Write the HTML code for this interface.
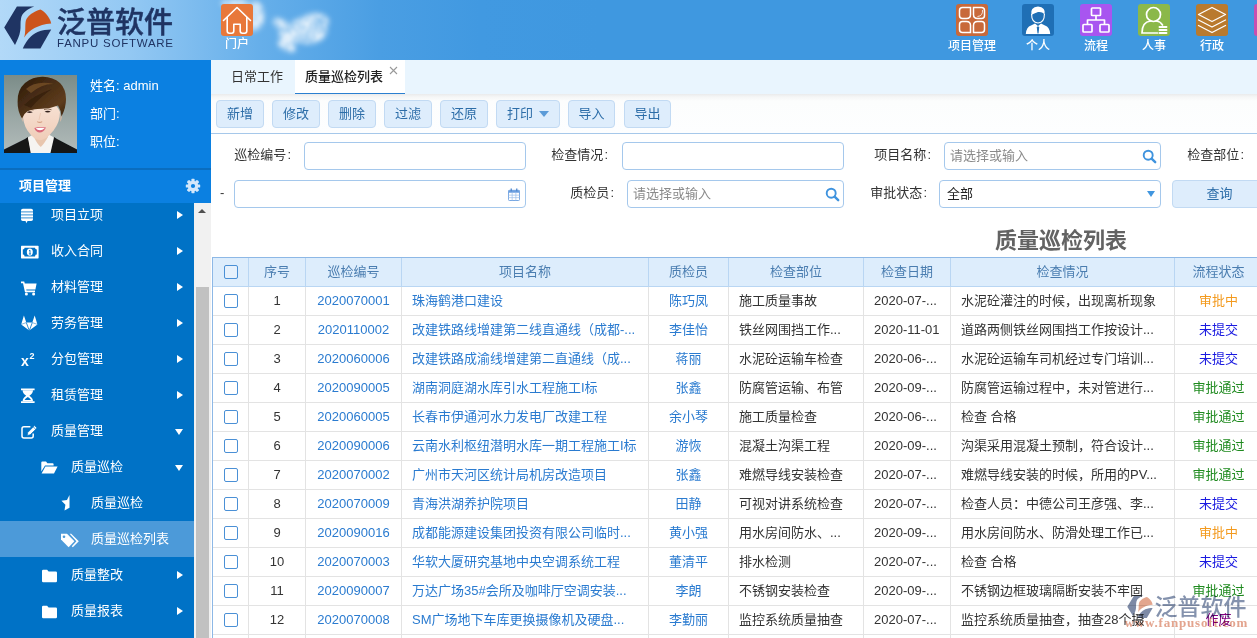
<!DOCTYPE html>
<html lang="zh-CN">
<head>
<meta charset="utf-8">
<title>质量巡检列表</title>
<style>
*{box-sizing:border-box;margin:0;padding:0}
html,body{width:1257px;height:638px;overflow:hidden;background:#fff}
body{font-family:"Liberation Sans","Noto Sans CJK SC",sans-serif;font-size:13px;color:#333;position:relative}
.abs{position:absolute}
/* header */
#hdr{position:absolute;left:0;top:0;width:1257px;height:60px;background:linear-gradient(90deg,#b2d9f8 0px,#93c8f3 130px,#66afea 260px,#4a9ee3 380px,#4199e1 480px,#3f98e0 600px,#3f98e0 1257px);overflow:hidden}
.logo-cn{position:absolute;left:57px;top:1px;font-size:29px;font-weight:500;-webkit-text-stroke:0.45px #1f3463;color:#1f3463;letter-spacing:0px;line-height:44px;white-space:nowrap}
.logo-en{position:absolute;left:57px;top:37px;font-size:11.5px;color:#1f3463;letter-spacing:0.75px;line-height:12px;white-space:nowrap}
.nav{position:absolute;top:0;width:58px;height:60px;text-align:center;color:#fff;font-size:12px}
.nav .ic{position:absolute;left:13px;top:4px;width:32px;height:32px;border-radius:3px}
.nav .tx{position:absolute;left:-10px;right:-10px;top:37.5px;font-weight:500;line-height:16px;text-align:center;white-space:nowrap}
/* sidebar */
#side{position:absolute;left:0;top:60px;width:211px;height:578px;background:#0b80e1}
#user{position:absolute;left:0;top:0;width:211px;height:108px}
#user .ph{position:absolute;left:4px;top:15px;width:73px;height:78px;background:#7f8d8a;overflow:hidden}
#user .ln{position:absolute;left:90px;color:#fff;font-size:13px;line-height:16px;white-space:nowrap}
#sep{position:absolute;left:0;top:108px;width:211px;height:2px;background:#0a6dbf}
#mtitle{position:absolute;left:0;top:110px;width:211px;height:33px;color:#fff;font-weight:bold;font-size:13px;line-height:31px;padding-left:19px}
#menu{position:absolute;left:0;top:143px;width:194px;height:435px;background:#0072c6;overflow:hidden}
#menu .it{position:absolute;left:0;width:194px;height:36px;color:#fff;font-size:13px;line-height:36px;white-space:nowrap}
#menu .it.sel{background:#4c9ad9}
#menu .it .t{position:absolute;top:0}
#menu .it .ar{position:absolute;left:177px;top:13.5px;width:0;height:0;border-left:6px solid #fff;border-top:4.5px solid transparent;border-bottom:4.5px solid transparent}
#menu .it .ad{position:absolute;left:174.5px;top:16px;width:0;height:0;border-top:6px solid #fff;border-left:4.5px solid transparent;border-right:4.5px solid transparent}
#menu svg{position:absolute}
#sb{position:absolute;left:194px;top:143px;width:17px;height:435px;background:#f1f1f1}
#sb .up{position:absolute;left:4px;top:6px;width:0;height:0;border-bottom:4px solid #505050;border-left:4px solid transparent;border-right:4px solid transparent}
#sb .th{position:absolute;left:2px;top:84px;width:13px;height:351px;background:#c1c1c1}
/* main */
#main{position:absolute;left:211px;top:60px;width:1046px;height:578px;background:#fff;overflow:hidden}
#tabs{position:absolute;left:0;top:0;width:1046px;height:34px;background:#e9f5fe}
#tabs .tab{position:absolute;top:0;height:34px;line-height:33px;font-size:13px;color:#333;white-space:nowrap}
#tabs .act{background:#fff;border-bottom:1px solid #2a7fd0;color:#222;font-weight:500}
#tools{position:absolute;left:0;top:34px;width:1046px;height:40px;background:linear-gradient(#eaebec 0,#f5f6f6 3px,#fcfdfd 7px,#fdfeff 100%);border-bottom:1px solid #a6c8ea}
.btn{position:absolute;top:6px;height:28px;border:1px solid #c2daf3;border-radius:4px;background:#deedfc;color:#2c6da8;font-size:13px;line-height:26px;text-align:center;white-space:nowrap}
#form{position:absolute;left:0;top:74px;width:1046px;height:90px}
.lbl{position:absolute;font-size:13px;color:#333;line-height:20px;white-space:nowrap;text-align:right}
.inp{position:absolute;height:28px;border:1px solid #a5c8ec;border-radius:4px;background:#fff;font-size:13px;line-height:26px;color:#8a8a8a;padding-left:5px;white-space:nowrap}
#ttl{position:absolute;left:700px;top:167px;width:300px;text-align:center;font-size:22px;font-weight:bold;color:#636363;line-height:28px;white-space:nowrap}
/* table */
#grid{position:absolute;left:1px;top:197px;width:1100px;height:400px;border-left:1px solid #8db8e6;border-top:1px solid #8db8e6}
#grid .hr{position:absolute;left:0;top:0;z-index:2;height:29px;width:1100px;background:#ddedfc;border-bottom:1px solid #b9d6f3}
#grid .r{position:absolute;left:0;height:29px;width:1100px;border-bottom:1px solid #e3e3e3}
#grid .c{position:absolute;top:0;height:100%;border-right:1px solid #e3e3e3;font-size:13px;line-height:28px;white-space:nowrap;overflow:hidden;color:#333}
#grid .hr .c{border-right:1px solid #b9d6f3;color:#4a7db0;text-align:center;line-height:28px}
.ck{position:absolute;left:11px;top:7px;width:14px;height:14px;border:1px solid #4a90d6;border-radius:2px;background:#fff}
.hr .ck{background:#e6f1fc;top:7px}
#grid .b{color:#2a7bd0}
.ctr{text-align:center}
.pl{padding-left:10px}
#grid .s1{color:#f39a1e}#grid .s2{color:#1a1ae0}#grid .s3{color:#1f8a1f}#grid .s4{color:#800080}
#wm{position:absolute;left:913.5px;top:531.5px;width:130px;height:42px;mix-blend-mode:multiply}
</style>
</head>
<body>
<div id="hdr">
  <svg class="abs" style="left:205px;top:0" width="260" height="60" viewBox="0 0 260 60">
    <defs><filter id="cl" x="-30%" y="-30%" width="160%" height="160%"><feGaussianBlur in="SourceGraphic" stdDeviation="2.6" result="b"/><feTurbulence type="fractalNoise" baseFrequency="0.06" numOctaves="3" seed="7" result="n"/><feColorMatrix in="n" type="matrix" values="0 0 0 0 1  0 0 0 0 1  0 0 0 0 1  1.1 0 0 0 0.25" result="na"/><feComposite in="b" in2="na" operator="in" result="c"/><feGaussianBlur in="c" stdDeviation="0.8"/></filter></defs>
    <g fill="#fff" filter="url(#cl)" opacity="0.8">
      <ellipse cx="50" cy="16" rx="9" ry="15"/><ellipse cx="30" cy="3" rx="14" ry="4"/>
      <ellipse cx="103" cy="30" rx="19" ry="14"/><ellipse cx="110" cy="22" rx="14" ry="9"/><ellipse cx="88" cy="34" rx="14" ry="9"/>
      <ellipse cx="76" cy="24" rx="9" ry="5" transform="rotate(30 76 24)"/><ellipse cx="82" cy="46" rx="10" ry="5" transform="rotate(25 82 46)"/>
    </g>
  </svg>
  <svg class="abs" style="left:0;top:0" width="60" height="60" viewBox="0 0 60 60">
    <path d="M4.2 27.4 L16.9 6.4 L34.3 6.4 C27 9 22 13 21.1 17.9 C20 23 21 27 20.2 31 C19.5 36 17 41 15 44.9 Z" fill="#1f3463"/>
    <path d="M40.4 9.4 C36 10.5 33 12.5 31 14.1 C28 16.5 26.5 18.5 25.8 20.7 C24.8 26 26 31 24.2 37.6 C29 30 38 24.5 51.2 23.5 C50.5 20 49 17.5 47 15 C45 12.5 43 10.5 40.4 9.4 Z" fill="#cc541c"/>
    <path d="M51.2 29.6 L40.4 48.4 L22.8 48.4 C26 41 31 35 37.6 32 C42 30.2 47 29.8 51.2 29.6 Z" fill="#1f3463"/>
  </svg>
  <div class="logo-cn">泛普软件</div>
  <div class="logo-en">FANPU SOFTWARE</div>

  <div class="nav" style="left:208px"><div class="ic" style="background:#e8783a">
    <svg width="32" height="32" viewBox="0 0 32 32"><path d="M2.5 16.5 L16 3.5 L29.5 16.5" fill="none" stroke="#fff" stroke-width="1.6" stroke-linecap="round" stroke-linejoin="round"/><path d="M6.2 13.5 V27 Q6.2 29.2 8.4 29.2 H10.6 Q12.8 29.2 12.8 27 V20.3 H19.2 V27 Q19.2 29.2 21.4 29.2 H23.6 Q25.8 29.2 25.8 27 V13.5" fill="none" stroke="#fff" stroke-width="1.6" stroke-linecap="round" stroke-linejoin="round"/></svg>
  </div><div class="tx" style="top:36px">门户</div></div>

  <div class="nav" style="left:943px"><div class="ic" style="background:#c8693a">
    <svg width="32" height="32" viewBox="0 0 32 32" fill="none" stroke="#fff" stroke-width="1.5"><path d="M6.5 3.5 H14.5 V10.5 Q14.5 14.5 10.5 14.5 H6.5 Q3.5 14.5 3.5 11.5 V6.5 Q3.5 3.5 6.5 3.5 Z"/><path d="M17.5 3.5 H25.5 Q28.5 3.5 28.5 6.5 V11.5 Q28.5 14.5 25.5 14.5 H21.5 Q17.5 14.5 17.5 10.5 Z"/><path d="M6.5 17.5 H10.5 Q14.5 17.5 14.5 21.5 V28.5 H6.5 Q3.5 28.5 3.5 25.5 V20.5 Q3.5 17.5 6.5 17.5 Z"/><path d="M21.5 17.5 H25.5 Q28.5 17.5 28.5 20.5 V25.5 Q28.5 28.5 25.5 28.5 H17.5 V21.5 Q17.5 17.5 21.5 17.5 Z"/><path d="M26.5 6 Q27 12 21.5 12.5" stroke-width="0.8"/></svg>
  </div><div class="tx">项目管理</div></div>

  <div class="nav" style="left:1009px"><div class="ic" style="background:#1f6fb5">
    <svg width="32" height="32" viewBox="0 0 32 32"><path d="M3.8 30 Q4.5 22.5 9 21.5 L13 19.5 L16 22 L19 19.5 L23 21.5 Q27.5 22.5 28.2 30 Z" fill="#fff"/><path d="M16 22 L14.8 23.5 L15.5 29.5 H16.5 L17.2 23.5 Z" fill="#1f6fb5"/><path d="M9.3 11 Q8 3 16 2.5 Q24 3 22.7 11 Q21 7.5 16 8 Q12 9.5 9.3 11 Z" fill="#fff"/><path d="M9.6 10 Q9.5 18.5 16 19 Q22.5 18.5 22.4 10" fill="none" stroke="#fff" stroke-width="1.1"/></svg>
  </div><div class="tx">个人</div></div>

  <div class="nav" style="left:1067px"><div class="ic" style="background:#a855f0">
    <svg width="32" height="32" viewBox="0 0 32 32" fill="none" stroke="#fff" stroke-width="1.7" stroke-linejoin="round"><rect x="11.5" y="4" width="9" height="7.5" rx="0.8"/><rect x="3" y="20.5" width="9" height="7.5" rx="0.8"/><rect x="20" y="20.5" width="9" height="7.5" rx="0.8"/><path d="M16 11.5 V16 M7.5 20.5 V16 H24.5 V20.5"/></svg>
  </div><div class="tx">流程</div></div>

  <div class="nav" style="left:1125px"><div class="ic" style="background:#8bb84a">
    <svg width="32" height="32" viewBox="0 0 32 32" fill="none" stroke="#fff" stroke-width="1.7" stroke-linecap="round"><circle cx="15.5" cy="10.5" r="7"/><path d="M19.5 29 H4 Q4 18 12.5 17 M18.5 17 Q22.5 17.5 24.5 21"/><path d="M21.5 23 H28.5 M21.5 26 H28.5 M21.5 29 H28.5" stroke-width="1.9"/></svg>
  </div><div class="tx">人事</div></div>

  <div class="nav" style="left:1183px"><div class="ic" style="background:#b97a2e">
    <svg width="32" height="32" viewBox="0 0 32 32" fill="none" stroke="#fff" stroke-width="1.3" stroke-linejoin="round" stroke-linecap="round"><path d="M16 3.5 L29.5 10.5 L16 17.5 L2.5 10.5 Z"/><path d="M2.5 16 L16 23 L29.5 16"/><path d="M2.5 21.5 L16 28.5 L29.5 21.5"/></svg>
  </div><div class="tx">行政</div></div>

  <div class="nav" style="left:1241px"><div class="ic" style="background:#c84fb0"></div></div>
</div>
<div id="side">
  <div id="user">
    <div class="ph"><svg width="73" height="78" viewBox="0 0 73 78">
      <defs><linearGradient id="pbg" x1="0" y1="0" x2="0" y2="1"><stop offset="0" stop-color="#7b8c88"/><stop offset="0.55" stop-color="#9ba8a6"/><stop offset="1" stop-color="#b2bbba"/></linearGradient>
      <filter id="pb" x="-10%" y="-10%" width="120%" height="120%"><feGaussianBlur stdDeviation="0.75"/></filter>
      <filter id="pb2" x="-10%" y="-10%" width="120%" height="120%"><feGaussianBlur stdDeviation="0.45"/></filter>
      <linearGradient id="hg" x1="0" y1="0" x2="1" y2="1"><stop offset="0" stop-color="#2a190a"/><stop offset="0.45" stop-color="#4b2f15"/><stop offset="0.75" stop-color="#5e3c1d"/><stop offset="1" stop-color="#38220e"/></linearGradient>
      <linearGradient id="fg" x1="0" y1="0" x2="0" y2="1"><stop offset="0" stop-color="#f7e3d6"/><stop offset="1" stop-color="#f0cdb8"/></linearGradient></defs>
      <rect width="73" height="78" fill="url(#pbg)"/>
      <g filter="url(#pb)">
        <path d="M-2 75.5 L21 64 L24 62 L36.5 72 L50 62 L53 64 L75 75.5 V80 H-2 Z" fill="#121317"/>
        <path d="M24 62.5 L30 59 H44 L50 62.5 L46 80 H28 Z" fill="#f6f4f1"/>
        <path d="M30 55 H44 V62 Q40 69 36.8 72 Q33 69 30 62 Z" fill="#e8c6ae"/>
        <path d="M24 62.5 L28.5 60.5 L37 80 H27 Z" fill="#f6f4f1"/>
        <path d="M19 38 Q18.5 48 23.5 55.5 Q30 65.2 36 65.2 Q42 65.2 49.5 55.5 Q56 47 56 37 Q52 26 37 26 Q24 26 19 38 Z" fill="url(#fg)"/>
        <path d="M18.3 40 Q16.3 42 18.8 47 Z M56.8 39 Q58.8 42 56.2 47 Z" fill="#e6bfa6"/>
      </g>
      <g filter="url(#pb2)">
        <path d="M30.3 53 Q36 51.3 42 52.6 Q39.5 57.6 35.7 57.6 Q32 57.4 30.3 53 Z" fill="#d8687a"/>
        <path d="M31.6 53.3 Q36 52.3 40.8 53.1 Q38.5 55.3 36 55.3 Q33.3 55.2 31.6 53.3 Z" fill="#fff"/>
        <path d="M22.6 37.3 Q25.5 35.3 28.8 37.3 Q25.6 38.8 22.6 37.3 Z M40.6 36.8 Q43.7 34.8 46.8 36.8 Q43.7 38.3 40.6 36.8 Z" fill="#33221d"/>
        <path d="M22 35.2 Q25.5 33.6 29.5 35 M40 34.6 Q44 33 47.5 34.8" stroke="#5b3d28" stroke-width="0.7" fill="none"/>
        <path d="M33.2 46.6 Q35.7 48.2 38.2 46.6" stroke="#d6a085" stroke-width="1.1" fill="none"/>
        <path d="M36.5 38 L35 45" stroke="#ebc9b4" stroke-width="1" fill="none"/>
      </g>
      <g filter="url(#pb)">
        <path d="M13.6 27 Q13 15 21 8 Q29 1.5 39 1.8 Q49 2 56 8 Q62 14 62 24 Q62 33 57.5 41.5 Q57 35 54 30.5 Q47 33.5 38 33.8 Q28 34 23.5 36.3 Q20 38.5 18 43.5 Q13.4 36 13.6 27 Z" fill="url(#hg)"/>
        <path d="M22 14 Q32 5 50 9 Q38 8.5 27 18 Z" fill="#7a5128" opacity="0.75"/>
        <path d="M20 30 Q30 20 48 14 Q36 22 27 33 Z" fill="#2c1a0b" opacity="0.55"/>
      </g>
    </svg></div>
    <div class="ln" style="top:18px">姓名: admin</div>
    <div class="ln" style="top:46px">部门:</div>
    <div class="ln" style="top:74px">职位:</div>
  </div>
  <div id="sep"></div>
  <div id="mtitle">项目管理<svg class="abs" style="left:185px;top:8px" width="16" height="16" viewBox="-8 -8 16 16"><g fill="#d3e7fb"><circle r="5.2"/><rect x="-1.6" y="-7.2" width="3.2" height="14.4" rx="0.6"/><rect x="-1.6" y="-7.2" width="3.2" height="14.4" rx="0.6" transform="rotate(45)"/><rect x="-1.6" y="-7.2" width="3.2" height="14.4" rx="0.6" transform="rotate(90)"/><rect x="-1.6" y="-7.2" width="3.2" height="14.4" rx="0.6" transform="rotate(135)"/></g><circle r="2.1" fill="#0b80e1"/></svg></div>
  <div id="menu">
    <div class="it" style="top:-6px"><svg style="left:20px;top:10px" width="16" height="18" viewBox="0 0 16 18" fill="#fff"><path d="M2.8 1.8 H11.2 Q13 1.8 13 3.6 V12.2 Q13 14 11.2 14 H7.6 L6.2 16.2 L5.6 14 H2.8 Q1 14 1 12.2 V3.6 Q1 1.8 2.8 1.8 Z"/><path d="M1 4.9 H13 M1 7.9 H13 M1 10.9 H13" stroke="#0072c6" stroke-width="0.8"/></svg><div class="t" style="left:51px">项目立项</div><div class="ar"></div></div>
    <div class="it" style="top:30px"><svg style="left:20px;top:10px" width="20" height="18" viewBox="0 0 20 18"><rect x="1" y="2.8" width="17.6" height="12.6" rx="0.6" fill="#fff"/><path d="M4.6 4.8 H15 Q15 6.6 16.8 6.6 V11.6 Q15 11.6 15 13.4 H4.6 Q4.6 11.6 2.8 11.6 V6.6 Q4.6 6.6 4.6 4.8 Z" fill="#0072c6"/><ellipse cx="9.8" cy="9.1" rx="3" ry="3.6" fill="#fff"/><path d="M9 8 L10 7.2 V11 M8.9 11 H11" stroke="#0072c6" stroke-width="0.9" fill="none"/></svg><div class="t" style="left:51px">收入合同</div><div class="ar"></div></div>
    <div class="it" style="top:66px"><svg style="left:20px;top:11px" width="18" height="16" viewBox="0 0 18 16" fill="#fff"><path d="M1 1.6 H4.2 L4.8 3.4 H16.6 L15.4 9.4 H6.2 L6.5 10.6 H15 V12.2 H5 L3 3.2 H1 Z"/><circle cx="6.4" cy="13.9" r="1.5"/><circle cx="13.6" cy="13.9" r="1.5"/></svg><div class="t" style="left:51px">材料管理</div><div class="ar"></div></div>
    <div class="it" style="top:102px"><svg style="left:20px;top:9px" width="19" height="18" viewBox="0 0 19 18" fill="#fff"><path d="M9.3 16.6 L1.2 10.4 L3.9 1.6 L6.3 8.6 H12.3 L14.7 1.6 L17.4 10.4 Z"/><path d="M6.3 8.6 L9.3 16.6 L12.3 8.6" stroke="#0072c6" stroke-width="0.8" fill="none"/><path d="M1.2 10.4 L6.3 8.6 M17.4 10.4 L12.3 8.6" stroke="#0072c6" stroke-width="0.5" fill="none"/></svg><div class="t" style="left:51px">劳务管理</div><div class="ar"></div></div>
    <div class="it" style="top:138px"><svg style="left:20px;top:9px" width="20" height="18" viewBox="0 0 20 18"><text x="1" y="15.5" font-family="Liberation Sans,sans-serif" font-weight="bold" font-size="14" fill="#fff">x</text><text x="9.5" y="9" font-family="Liberation Sans,sans-serif" font-weight="bold" font-size="9" fill="#fff">2</text></svg><div class="t" style="left:51px">分包管理</div><div class="ar"></div></div>
    <div class="it" style="top:174px"><svg style="left:20px;top:10px" width="16" height="18" viewBox="0 0 16 18" fill="#fff"><path d="M1 1.4 H14.6 V3.2 H1 Z M1 14.2 H14.6 V16 H1 Z"/><path d="M2.6 3.2 H13 Q13 6.6 9.4 8.7 Q13 10.8 13 14.2 H2.6 Q2.6 10.8 6.2 8.7 Q2.6 6.6 2.6 3.2 Z"/><path d="M4.6 13 H11 Q10.4 11.4 7.8 10 Q5.2 11.4 4.6 13 Z" fill="#0072c6"/></svg><div class="t" style="left:51px">租赁管理</div><div class="ar"></div></div>
    <div class="it" style="top:210px"><svg style="left:20px;top:10px" width="19" height="18" viewBox="0 0 19 18" fill="none" stroke="#fff"><path d="M13.2 10.5 V13 Q13.2 15 11.2 15 H4 Q2 15 2 13 V5.8 Q2 3.8 4 3.8 H10.4" stroke-width="1.5"/><path d="M7.2 12.4 L7.8 9.4 L14.6 2.6 L17 5 L10.2 11.8 Z" fill="#fff" stroke="#0072c6" stroke-width="0.7"/><path d="M13.3 3.9 L15.7 6.3" stroke="#0072c6" stroke-width="0.7"/></svg><div class="t" style="left:51px">质量管理</div><div class="ad"></div></div>
    <div class="it" style="top:246px"><svg style="left:40px;top:11px" width="19" height="16" viewBox="0 0 19 16" fill="#fff"><path d="M1.3 2.6 Q1.3 1.6 2.3 1.6 H6 L7.4 3.2 H12.6 Q13.6 3.2 13.6 4.2 V5.6 H5 L1.3 11.6 Z"/><path d="M5.4 6.6 H17.6 L14 13.6 H1.6 Z"/></svg><div class="t" style="left:71px">质量巡检</div><div class="ad"></div></div>
    <div class="it" style="top:282px"><svg style="left:60px;top:9px;margin-left:-0.5px" width="16" height="18" viewBox="0 0 16 18" fill="#fff"><path d="M9.5 1 L6.97 6.02 L1.42 6.87 L5.41 10.83 L4.5 16.38 L9.5 13.8 Z"/></svg><div class="t" style="left:91px">质量巡检</div></div>
    <div class="it sel" style="top:318px"><svg style="left:60px;top:11px" width="20" height="17" viewBox="0 0 20 17" fill="#fff"><path d="M1 1.8 H7 L14.4 9.2 L8.6 15.2 L1 7.6 Z"/><circle cx="4" cy="4.8" r="1.3" fill="#4c9ad9"/><path d="M9.6 1.8 H11.2 L18.8 9.2 L12.8 15.2 L11.8 14.2 L16.4 9.2 Z"/></svg><div class="t" style="left:91px">质量巡检列表</div></div>
    <div class="it" style="top:354px"><svg style="left:41px;top:11px" width="18" height="16" viewBox="0 0 18 16" fill="#fff"><path d="M1 3 Q1 1.8 2.2 1.8 H6.1 L7.6 3.6 H14.8 Q16 3.6 16 4.8 V13 Q16 14.2 14.8 14.2 H2.2 Q1 14.2 1 13 Z"/></svg><div class="t" style="left:71px">质量整改</div><div class="ar"></div></div>
    <div class="it" style="top:390px"><svg style="left:41px;top:11px" width="18" height="16" viewBox="0 0 18 16" fill="#fff"><path d="M1 3 Q1 1.8 2.2 1.8 H6.1 L7.6 3.6 H14.8 Q16 3.6 16 4.8 V13 Q16 14.2 14.8 14.2 H2.2 Q1 14.2 1 13 Z"/></svg><div class="t" style="left:71px">质量报表</div><div class="ar"></div></div>
  </div>
  <div id="sb"><div class="up"></div><div class="th"></div></div>
</div>
<div id="main">
  <div id="tabs">
    <div class="tab" style="left:20px">日常工作</div>
    <div class="tab act" style="left:84px;width:110px;padding-left:10px">质量巡检列表<svg class="abs" style="left:94px;top:6px" width="9" height="9" viewBox="0 0 9 9"><path d="M1 1 L8 8 M8 1 L1 8" stroke="#999" stroke-width="1.1"/></svg></div>
  </div>
  <div id="tools">
    <div class="btn" style="left:5px;width:48px">新增</div>
    <div class="btn" style="left:61px;width:48px">修改</div>
    <div class="btn" style="left:117px;width:48px">删除</div>
    <div class="btn" style="left:173px;width:48px">过滤</div>
    <div class="btn" style="left:229px;width:48px">还原</div>
    <div class="btn" style="left:285px;width:64px;text-align:left;padding-left:10px">打印<span class="abs" style="left:42px;top:10px;width:0;height:0;border-top:6px solid #5b9bd8;border-left:5px solid transparent;border-right:5px solid transparent"></span></div>
    <div class="btn" style="left:357px;width:47px">导入</div>
    <div class="btn" style="left:413px;width:47px">导出</div>
  </div>
  <div id="form">
    <div class="lbl" style="left:0;width:80px;top:11px">巡检编号<span style="margin-left:1px">:</span></div>
    <div class="inp" style="left:93px;top:8px;width:222px"></div>
    <div class="lbl" style="left:300px;width:97px;top:11px">检查情况<span style="margin-left:1px">:</span></div>
    <div class="inp" style="left:411px;top:8px;width:222px"></div>
    <div class="lbl" style="left:620px;width:100px;top:11px">项目名称<span style="margin-left:1px">:</span></div>
    <div class="inp" style="left:733px;top:8px;width:217px">请选择或输入<svg class="abs" style="right:3px;top:5.5px" width="15" height="15" viewBox="0 0 15 15"><circle cx="6.2" cy="6.2" r="4.5" fill="none" stroke="#3f93de" stroke-width="1.9"/><path d="M9.6 9.6 L13.2 13.2" stroke="#3f93de" stroke-width="2.4" stroke-linecap="round"/></svg></div>
    <div class="lbl" style="left:950px;width:83px;top:11px">检查部位<span style="margin-left:1px">:</span></div>
    <div class="lbl" style="left:9px;top:49px">-</div>
    <div class="inp" style="left:23px;top:46px;width:292px"><svg class="abs" style="right:5px;top:6.5px" width="12" height="13" viewBox="0 0 13 14"><rect x="0.5" y="2.5" width="12" height="11" rx="1" fill="#fff" stroke="#6b9fe0" stroke-width="1"/><rect x="0.5" y="2.5" width="12" height="2.6" fill="#6b9fe0"/><path d="M3.5 0.5 V3.5 M9.5 0.5 V3.5" stroke="#4d86cc" stroke-width="1.4"/><path d="M0.5 7.7 H12.5 M0.5 10.4 H12.5 M4.5 5 V13.5 M8.5 5 V13.5" stroke="#9fc0ea" stroke-width="0.8"/></svg></div>
    <div class="lbl" style="left:300px;width:103px;top:49px">质检员<span style="margin-left:1px">:</span></div>
    <div class="inp" style="left:416px;top:46px;width:217px">请选择或输入<svg class="abs" style="right:3px;top:5.5px" width="15" height="15" viewBox="0 0 15 15"><circle cx="6.2" cy="6.2" r="4.5" fill="none" stroke="#3f93de" stroke-width="1.9"/><path d="M9.6 9.6 L13.2 13.2" stroke="#3f93de" stroke-width="2.4" stroke-linecap="round"/></svg></div>
    <div class="lbl" style="left:620px;width:96px;top:49px">审批状态<span style="margin-left:1px">:</span></div>
    <div class="inp" style="left:728px;top:46px;width:222px;color:#222;padding-left:7px">全部<span class="abs" style="right:5.5px;top:10px;width:0;height:0;border-top:6px solid #4196df;border-left:4.5px solid transparent;border-right:4.5px solid transparent"></span></div>
    <div class="btn" style="left:961px;top:46px;width:95px;height:28px;line-height:26px">查询</div>
  </div>
  <div id="ttl">质量巡检列表</div>
  <div id="grid">
    <div class="hr">
      <div class="c" style="left:0px;width:36px"><div class="ck"></div></div>
      <div class="c" style="left:36px;width:57px">序号</div>
      <div class="c" style="left:93px;width:96px">巡检编号</div>
      <div class="c" style="left:189px;width:247px">项目名称</div>
      <div class="c" style="left:436px;width:80px">质检员</div>
      <div class="c" style="left:516px;width:135px">检查部位</div>
      <div class="c" style="left:651px;width:87px">检查日期</div>
      <div class="c" style="left:738px;width:224px">检查情况</div>
      <div class="c" style="left:962px;width:88px">流程状态</div>
    </div>
    <div class="r" style="top:29px">
      <div class="c " style="left:0px;width:36px"><div class="ck"></div></div>
      <div class="c ctr" style="left:36px;width:57px">1</div>
      <div class="c ctr b" style="left:93px;width:96px">2020070001</div>
      <div class="c pl b" style="left:189px;width:247px">珠海鹤港口建设</div>
      <div class="c ctr b" style="left:436px;width:80px">陈巧凤</div>
      <div class="c pl" style="left:516px;width:135px">施工质量事故</div>
      <div class="c pl" style="left:651px;width:87px">2020-07-...</div>
      <div class="c pl" style="left:738px;width:224px">水泥砼灌注的时候，出现离析现象</div>
      <div class="c ctr s1" style="left:962px;width:88px">审批中</div>
    </div>
    <div class="r" style="top:58px">
      <div class="c " style="left:0px;width:36px"><div class="ck"></div></div>
      <div class="c ctr" style="left:36px;width:57px">2</div>
      <div class="c ctr b" style="left:93px;width:96px">2020110002</div>
      <div class="c pl b" style="left:189px;width:247px">改建铁路线增建第二线直通线（成都-...</div>
      <div class="c ctr b" style="left:436px;width:80px">李佳怡</div>
      <div class="c pl" style="left:516px;width:135px">铁丝网围挡工作...</div>
      <div class="c pl" style="left:651px;width:87px">2020-11-01</div>
      <div class="c pl" style="left:738px;width:224px">道路两侧铁丝网围挡工作按设计...</div>
      <div class="c ctr s2" style="left:962px;width:88px">未提交</div>
    </div>
    <div class="r" style="top:87px">
      <div class="c " style="left:0px;width:36px"><div class="ck"></div></div>
      <div class="c ctr" style="left:36px;width:57px">3</div>
      <div class="c ctr b" style="left:93px;width:96px">2020060006</div>
      <div class="c pl b" style="left:189px;width:247px">改建铁路成渝线增建第二直通线（成...</div>
      <div class="c ctr b" style="left:436px;width:80px">蒋丽</div>
      <div class="c pl" style="left:516px;width:135px">水泥砼运输车检查</div>
      <div class="c pl" style="left:651px;width:87px">2020-06-...</div>
      <div class="c pl" style="left:738px;width:224px">水泥砼运输车司机经过专门培训...</div>
      <div class="c ctr s2" style="left:962px;width:88px">未提交</div>
    </div>
    <div class="r" style="top:116px">
      <div class="c " style="left:0px;width:36px"><div class="ck"></div></div>
      <div class="c ctr" style="left:36px;width:57px">4</div>
      <div class="c ctr b" style="left:93px;width:96px">2020090005</div>
      <div class="c pl b" style="left:189px;width:247px">湖南洞庭湖水库引水工程施工I标</div>
      <div class="c ctr b" style="left:436px;width:80px">张鑫</div>
      <div class="c pl" style="left:516px;width:135px">防腐管运输、布管</div>
      <div class="c pl" style="left:651px;width:87px">2020-09-...</div>
      <div class="c pl" style="left:738px;width:224px">防腐管运输过程中，未对管进行...</div>
      <div class="c ctr s3" style="left:962px;width:88px">审批通过</div>
    </div>
    <div class="r" style="top:145px">
      <div class="c " style="left:0px;width:36px"><div class="ck"></div></div>
      <div class="c ctr" style="left:36px;width:57px">5</div>
      <div class="c ctr b" style="left:93px;width:96px">2020060005</div>
      <div class="c pl b" style="left:189px;width:247px">长春市伊通河水力发电厂改建工程</div>
      <div class="c ctr b" style="left:436px;width:80px">余小琴</div>
      <div class="c pl" style="left:516px;width:135px">施工质量检查</div>
      <div class="c pl" style="left:651px;width:87px">2020-06-...</div>
      <div class="c pl" style="left:738px;width:224px">检查 合格</div>
      <div class="c ctr s3" style="left:962px;width:88px">审批通过</div>
    </div>
    <div class="r" style="top:174px">
      <div class="c " style="left:0px;width:36px"><div class="ck"></div></div>
      <div class="c ctr" style="left:36px;width:57px">6</div>
      <div class="c ctr b" style="left:93px;width:96px">2020090006</div>
      <div class="c pl b" style="left:189px;width:247px">云南水利枢纽潜明水库一期工程施工I标</div>
      <div class="c ctr b" style="left:436px;width:80px">游恢</div>
      <div class="c pl" style="left:516px;width:135px">混凝土沟渠工程</div>
      <div class="c pl" style="left:651px;width:87px">2020-09-...</div>
      <div class="c pl" style="left:738px;width:224px">沟渠采用混凝土预制，符合设计...</div>
      <div class="c ctr s3" style="left:962px;width:88px">审批通过</div>
    </div>
    <div class="r" style="top:203px">
      <div class="c " style="left:0px;width:36px"><div class="ck"></div></div>
      <div class="c ctr" style="left:36px;width:57px">7</div>
      <div class="c ctr b" style="left:93px;width:96px">2020070002</div>
      <div class="c pl b" style="left:189px;width:247px">广州市天河区统计局机房改造项目</div>
      <div class="c ctr b" style="left:436px;width:80px">张鑫</div>
      <div class="c pl" style="left:516px;width:135px">难燃导线安装检查</div>
      <div class="c pl" style="left:651px;width:87px">2020-07-...</div>
      <div class="c pl" style="left:738px;width:224px">难燃导线安装的时候，所用的PV...</div>
      <div class="c ctr s3" style="left:962px;width:88px">审批通过</div>
    </div>
    <div class="r" style="top:232px">
      <div class="c " style="left:0px;width:36px"><div class="ck"></div></div>
      <div class="c ctr" style="left:36px;width:57px">8</div>
      <div class="c ctr b" style="left:93px;width:96px">2020070009</div>
      <div class="c pl b" style="left:189px;width:247px">青海洪湖养护院项目</div>
      <div class="c ctr b" style="left:436px;width:80px">田静</div>
      <div class="c pl" style="left:516px;width:135px">可视对讲系统检查</div>
      <div class="c pl" style="left:651px;width:87px">2020-07-...</div>
      <div class="c pl" style="left:738px;width:224px">检查人员：中德公司王彦强、李...</div>
      <div class="c ctr s2" style="left:962px;width:88px">未提交</div>
    </div>
    <div class="r" style="top:261px">
      <div class="c " style="left:0px;width:36px"><div class="ck"></div></div>
      <div class="c ctr" style="left:36px;width:57px">9</div>
      <div class="c ctr b" style="left:93px;width:96px">2020090016</div>
      <div class="c pl b" style="left:189px;width:247px">成都能源建设集团投资有限公司临时...</div>
      <div class="c ctr b" style="left:436px;width:80px">黄小强</div>
      <div class="c pl" style="left:516px;width:135px">用水房间防水、...</div>
      <div class="c pl" style="left:651px;width:87px">2020-09-...</div>
      <div class="c pl" style="left:738px;width:224px">用水房间防水、防滑处理工作已...</div>
      <div class="c ctr s1" style="left:962px;width:88px">审批中</div>
    </div>
    <div class="r" style="top:290px">
      <div class="c " style="left:0px;width:36px"><div class="ck"></div></div>
      <div class="c ctr" style="left:36px;width:57px">10</div>
      <div class="c ctr b" style="left:93px;width:96px">2020070003</div>
      <div class="c pl b" style="left:189px;width:247px">华软大厦研究基地中央空调系统工程</div>
      <div class="c ctr b" style="left:436px;width:80px">董清平</div>
      <div class="c pl" style="left:516px;width:135px">排水检测</div>
      <div class="c pl" style="left:651px;width:87px">2020-07-...</div>
      <div class="c pl" style="left:738px;width:224px">检查 合格</div>
      <div class="c ctr s2" style="left:962px;width:88px">未提交</div>
    </div>
    <div class="r" style="top:319px">
      <div class="c " style="left:0px;width:36px"><div class="ck"></div></div>
      <div class="c ctr" style="left:36px;width:57px">11</div>
      <div class="c ctr b" style="left:93px;width:96px">2020090007</div>
      <div class="c pl b" style="left:189px;width:247px">万达广场35#会所及咖啡厅空调安装...</div>
      <div class="c ctr b" style="left:436px;width:80px">李朗</div>
      <div class="c pl" style="left:516px;width:135px">不锈钢安装检查</div>
      <div class="c pl" style="left:651px;width:87px">2020-09-...</div>
      <div class="c pl" style="left:738px;width:224px">不锈钢边框玻璃隔断安装不牢固</div>
      <div class="c ctr s3" style="left:962px;width:88px">审批通过</div>
    </div>
    <div class="r" style="top:348px">
      <div class="c " style="left:0px;width:36px"><div class="ck"></div></div>
      <div class="c ctr" style="left:36px;width:57px">12</div>
      <div class="c ctr b" style="left:93px;width:96px">2020070008</div>
      <div class="c pl b" style="left:189px;width:247px">SM广场地下车库更换摄像机及硬盘...</div>
      <div class="c ctr b" style="left:436px;width:80px">李勤丽</div>
      <div class="c pl" style="left:516px;width:135px">监控系统质量抽查</div>
      <div class="c pl" style="left:651px;width:87px">2020-07-...</div>
      <div class="c pl" style="left:738px;width:224px">监控系统质量抽查，抽查28个摄</div>
      <div class="c ctr s4" style="left:962px;width:88px">作废</div>
    </div>
    <div class="r" style="top:377px">
      <div class="c " style="left:0px;width:36px"><div class="ck"></div></div>
      <div class="c ctr" style="left:36px;width:57px">13</div>
      <div class="c ctr b" style="left:93px;width:96px"></div>
      <div class="c pl b" style="left:189px;width:247px"></div>
      <div class="c ctr b" style="left:436px;width:80px"></div>
      <div class="c pl" style="left:516px;width:135px"></div>
      <div class="c pl" style="left:651px;width:87px"></div>
      <div class="c pl" style="left:738px;width:224px"></div>
      <div class="c ctr " style="left:962px;width:88px"></div>
    </div>
  </div>
<div id="wm">
    <svg class="abs" style="left:0;top:0" width="33" height="30" viewBox="0 0 61.1 55.6"><path d="M4.2 27.4 L16.9 6.4 L34.3 6.4 C27 9 22 13 21.1 17.9 C20 23 21 27 20.2 31 C19.5 36 17 41 15 44.9 Z" fill="#7d8aa6"/><path d="M40.4 9.4 C36 10.5 33 12.5 31 14.1 C28 16.5 26.5 18.5 25.8 20.7 C24.8 26 26 31 24.2 37.6 C29 30 38 24.5 51.2 23.5 C50.5 20 49 17.5 47 15 C45 12.5 43 10.5 40.4 9.4 Z" fill="#e3a68e"/><path d="M51.2 29.6 L40.4 48.4 L22.8 48.4 C26 41 31 35 37.6 32 C42 30.2 47 29.8 51.2 29.6 Z" fill="#7d8aa6"/></svg>
    <div class="abs" style="left:30px;top:-1px;font-size:23px;line-height:32px;color:#8492ad;white-space:nowrap;font-weight:500">泛普软件</div>
    <div class="abs" style="left:0px;top:23px;font-family:'Liberation Serif',serif;font-weight:bold;font-size:13px;line-height:16px;letter-spacing:0.82px;color:#e3a48e;white-space:nowrap">www.fanpusoft.com</div>
  </div>
</div>
</body>
</html>
